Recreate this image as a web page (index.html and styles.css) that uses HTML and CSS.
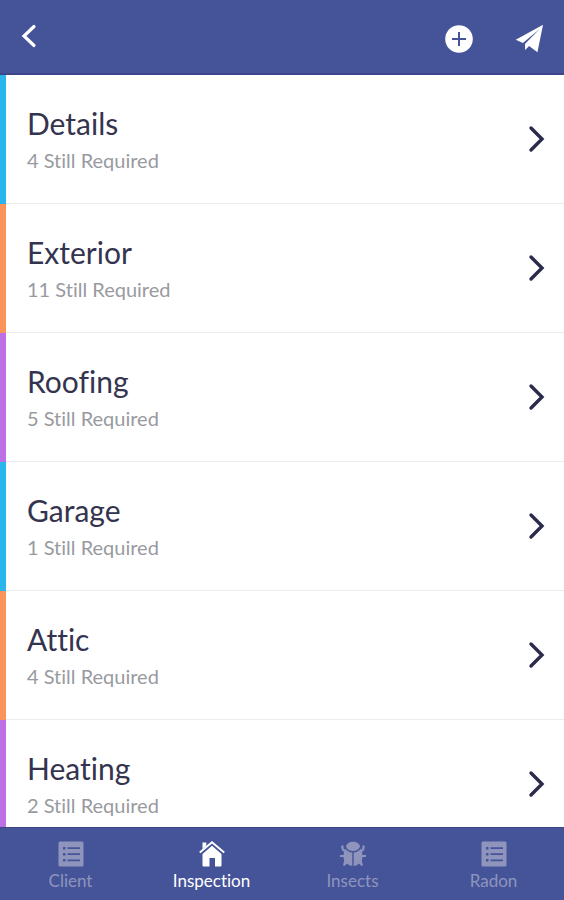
FILE: index.html
```html
<!DOCTYPE html>
<html lang="en">
<head>
<meta charset="utf-8">
<meta name="viewport" content="width=device-width, initial-scale=1">
<title>Inspection</title>
<link rel="stylesheet" href="styles.css">
</head>
<body>
<svg class="symbols" aria-hidden="true">
  <symbol id="chevron" viewBox="0 0 18 28"><path d="M3 3 14 14 3 25" fill="none" stroke="currentColor" stroke-width="3.4" stroke-linecap="round" stroke-linejoin="miter"/></symbol>
  <symbol id="list" viewBox="0 0 26 26">
    <path fill="currentColor" fill-rule="evenodd" d="M2 .5h22a1.500 1.500 0 0 1 1.500 1.500v22a1.500 1.500 0 0 1-1.500 1.500H2A1.500 1.500 0 0 1 .5 24V2A1.500 1.500 0 0 1 2 .5ZM5 6v2.500h2.500V6ZM9.500 6.300v1.700H22V6.300ZM5 12v2.500h2.500V12ZM9.500 12.300V14H22v-1.700ZM5 18v2.500h2.500V18ZM9.500 18.500v1.700H22v-1.700Z"/>
  </symbol>
</svg>
<header class="topbar">
  <button class="icon-button" type="button" aria-label="Back"><svg class="back" viewBox="0 0 16 24"><path d="M13 2.500 3 12l10 9.500" fill="none" stroke="currentColor" stroke-width="3.200" stroke-linecap="round"/></svg></button>
  <div class="actions">
    <button class="icon-button" type="button" aria-label="Add"><svg class="add" viewBox="0 0 28 28"><circle cx="14" cy="14" r="13.800" fill="currentColor"/><path class="plus" d="M14 7v14M7 14h14"/></svg></button>
    <button class="icon-button" type="button" aria-label="Send"><svg class="send" viewBox="0 0 30 30"><path fill="currentColor" d="M29 .8.8 16.200l7.400 3.500L25.500 5.200 10.300 20.700l.2 6.300 4.100-4.300 8.600 6.500Z"/></svg></button>
  </div>
</header>
<main class="sections">
  <a class="row blue" href="#details"><span class="text"><span class="title">Details</span><span class="status">4 Still Required</span></span><svg class="chevron"><use href="#chevron"/></svg></a>
  <a class="row orange" href="#exterior"><span class="text"><span class="title">Exterior</span><span class="status">11 Still Required</span></span><svg class="chevron"><use href="#chevron"/></svg></a>
  <a class="row purple" href="#roofing"><span class="text"><span class="title">Roofing</span><span class="status">5 Still Required</span></span><svg class="chevron"><use href="#chevron"/></svg></a>
  <a class="row blue" href="#garage"><span class="text"><span class="title">Garage</span><span class="status">1 Still Required</span></span><svg class="chevron"><use href="#chevron"/></svg></a>
  <a class="row orange" href="#attic"><span class="text"><span class="title">Attic</span><span class="status">4 Still Required</span></span><svg class="chevron"><use href="#chevron"/></svg></a>
  <a class="row purple" href="#heating"><span class="text"><span class="title">Heating</span><span class="status">2 Still Required</span></span><svg class="chevron"><use href="#chevron"/></svg></a>
</main>
<nav class="tabs">
  <a class="tab" href="#client"><svg class="tab-icon"><use href="#list"/></svg><span>Client</span></a>
  <a class="tab active" href="#inspection" aria-current="page"><svg class="tab-icon" viewBox="0 0 26 26"><path fill="currentColor" d="M13 4.800 22.500 13v11.500a1 1 0 0 1-1 1H16V17h-5.500v8.500H4.500a1 1 0 0 1-1-1V13Z"/><path d="M.8 11.500 13 1.300l12.200 10.200" fill="none" stroke="currentColor" stroke-width="1.900"/><path fill="currentColor" d="M3.500 1.500h3.800v3.300L3.500 8Z"/></svg><span>Inspection</span></a>
  <a class="tab" href="#insects"><svg class="tab-icon" viewBox="0 0 26 26"><path fill="currentColor" d="M6 5.500C6.500 2.500 9.500.8 13 .8s6.500 1.700 7 4.700C19 8.500 16 10 13 10S7 8.500 6 5.500Z"/><path fill="currentColor" d="M5 7.500Q8 11.200 12.300 11.500V25Q9 24.500 7 22.500L4.800 24.800 3 24.500 4.200 19.500Q3.300 17 3.600 14 3.900 10.500 5 7.500ZM21 7.500Q18 11.200 13.700 11.500V25Q17 24.500 19 22.500L21.200 24.800 23 24.500 21.800 19.500Q22.700 17 22.400 14 22.100 10.500 21 7.500Z"/><path fill="none" stroke="currentColor" stroke-width="2.200" d="M5 10.500 2.800 8.500 2.200 4.500M5 15H0M21 10.500l2.200-2 .6-4M21 15H26"/></svg><span>Insects</span></a>
  <a class="tab" href="#radon"><svg class="tab-icon"><use href="#list"/></svg><span>Radon</span></a>
</nav>
</body>
</html>
```
FILE: styles.css
```css
* { box-sizing: border-box; }

body {
  margin: 0;
  height: 100vh;
  display: flex;
  flex-direction: column;
  background: #fff;
  color: #2b2b4c;
  font-family: Lato, "Liberation Sans", sans-serif;
  font-variant-ligatures: none;
}

a { color: inherit; text-decoration: none; }
svg { display: block; flex: none; }
.symbols { position: absolute; width: 0; height: 0; }

.topbar {
  flex: none;
  display: flex;
  align-items: flex-start;
  justify-content: space-between;
  height: 75px;
  padding: 24px 20px 0 21px;
  background: #455499;
  border-bottom: 2px solid #3d458b;
  color: #fff;
}
.actions { display: flex; align-items: center; gap: 42px; }
.icon-button { padding: 0; border: 0; background: none; color: inherit; cursor: pointer; }
.back { width: 16px; height: 24px; }
.add { width: 28px; height: 28px; }
.plus { fill: none; stroke: #455499; stroke-width: 2; }
.send { width: 29px; height: 29px; }

.sections { flex: 1; min-height: 0; overflow-y: auto; scrollbar-width: none; }
.row {
  display: flex;
  align-items: center;
  justify-content: space-between;
  height: 129px;
  padding: 0 18px 2px 21px;
  border-left: 6px solid;
  box-shadow: inset 0 -1px #ececf0;
}
.blue { border-left-color: #2bb5ed; }
.orange { border-left-color: #fc935a; }
.purple { border-left-color: #bd70e5; }
.text { display: flex; flex-direction: column; gap: 4px; }
.title { font-size: 30px; line-height: 38px; color: #34344e; }
.status { font-size: 20px; line-height: 28px; color: #999a9f; }
.chevron { width: 18px; height: 28px; color: #2b2b4c; }

.tabs {
  flex: none;
  display: flex;
  height: 73px;
  padding-top: 13px;
  background: #455499;
  border-top: 1px solid #3d458b;
  color: #8e94bc;
}
.tab { flex: 1; display: flex; flex-direction: column; align-items: center; gap: 3px; font-size: 17px; line-height: 22px; }
.tab-icon { width: 26px; height: 26px; }
.active { color: #fff; }
```
